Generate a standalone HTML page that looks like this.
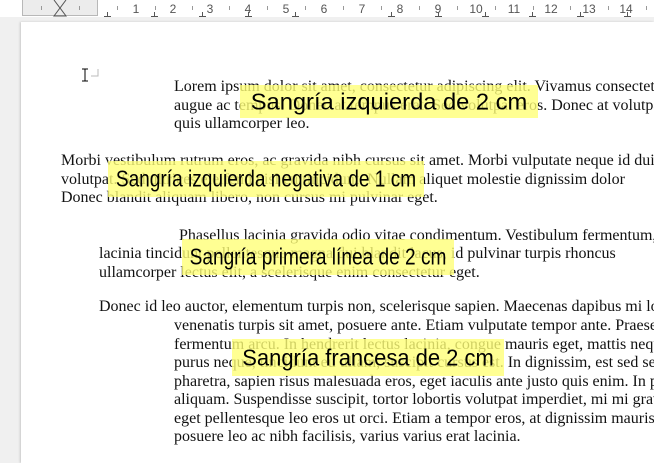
<!DOCTYPE html>
<html><head><meta charset="utf-8"><style>
html,body{margin:0;padding:0;width:654px;height:463px;overflow:hidden;background:#f0f0f0;position:relative}
.ruler{position:absolute;left:0;top:0;width:654px;height:17px;background:#fff;}
.rgray{position:absolute;left:22px;top:0;width:76px;height:16px;background:#ececec;border:1px solid #b8b8b8;border-top:none;box-sizing:border-box}
.num{position:absolute;top:2px;font:12px "Liberation Sans",sans-serif;color:#555;transform:translateX(-50%)}
.tick{position:absolute;top:6px;width:1px;height:4px;background:#999}
.tab{position:absolute;top:12px;width:7px;height:4px;border-bottom:1px solid #555}
.tab:after{content:"";position:absolute;left:3px;top:0;width:1px;height:4px;background:#555}
.page{position:absolute;left:21px;top:22px;width:633px;height:441px;background:#fff;box-shadow:-1px 0 2px #c8c8c8;overflow:hidden}
.t{position:absolute;white-space:nowrap;font:16px/18.5px "Liberation Serif",serif;color:#111}
.y{position:absolute;background:rgba(255,255,120,0.8);white-space:nowrap;overflow:hidden}
.y span{position:absolute;left:50%;top:50%;font:23px "Liberation Sans",sans-serif;color:#000;transform:translate(-50%,-50%) scaleX(0.83)}
</style></head><body>
<div class="ruler">
<div class="rgray"></div>
<svg style="position:absolute;left:53px;top:0" width="14" height="17"><path d="M1 0 L7 8 L13 0 M1 16 L7 8 L13 16 Z" fill="none" stroke="#555"/></svg>
<div class="tick" style="left:41px"></div><div class="tick" style="left:79px"></div>
<div class="num" style="left:136px">1</div><div class="num" style="left:173px">2</div><div class="num" style="left:210px">3</div><div class="num" style="left:248px">4</div><div class="num" style="left:286px">5</div><div class="num" style="left:324px">6</div><div class="num" style="left:362px">7</div><div class="num" style="left:400px">8</div><div class="num" style="left:438px">9</div><div class="num" style="left:476px">10</div><div class="num" style="left:514px">11</div><div class="num" style="left:551px">12</div><div class="num" style="left:589px">13</div><div class="num" style="left:626px">14</div>
<div class="tick" style="left:117px"></div><div class="tick" style="left:155px"></div><div class="tick" style="left:192px"></div><div class="tick" style="left:229px"></div><div class="tick" style="left:267px"></div><div class="tick" style="left:305px"></div><div class="tick" style="left:343px"></div><div class="tick" style="left:381px"></div><div class="tick" style="left:419px"></div><div class="tick" style="left:457px"></div><div class="tick" style="left:495px"></div><div class="tick" style="left:533px"></div><div class="tick" style="left:570px"></div><div class="tick" style="left:608px"></div><div class="tick" style="left:646px"></div>
<div class="tab" style="left:104px"></div><div class="tab" style="left:151px"></div><div class="tab" style="left:199px"></div><div class="tab" style="left:245px"></div><div class="tab" style="left:292px"></div><div class="tab" style="left:388px"></div><div class="tab" style="left:435px"></div><div class="tab" style="left:482px"></div><div class="tab" style="left:529px"></div><div class="tab" style="left:577px"></div><div class="tab" style="left:624px"></div>
</div>
<div class="page">
<svg style="position:absolute;left:59px;top:44px" width="20" height="20"><path d="M2 3h6M5 3v12M2 15h6" stroke="#000" fill="none"/><path d="M11 10h7V3" stroke="#bbb" fill="none"/></svg>
<div class="t" style="left:153px;top:56px">Lorem ipsum dolor sit amet, consectetur adipiscing elit. Vivamus consectetur<br>augue ac tempus. Donec at tempus erat. Sed volutpat eros. Donec at volutpat<br>quis ullamcorper leo.</div>
<div class="t" style="left:40px;top:130px">Morbi vestibulum rutrum eros, ac gravida nibh cursus sit amet. Morbi vulputate neque id dui<br>volutpat. Sed ultrices eleifend nisl eu tincidunt. Nullam aliquet molestie dignissim dolor<br>Donec blandit aliquam libero, non cursus mi pulvinar eget.</div>
<div class="t" style="left:158px;top:205px">Phasellus lacinia gravida odio vitae condimentum. Vestibulum fermentum,</div>
<div class="t" style="left:78px;top:223px">lacinia tincidunt pellentesque magna dui blandit lacus, id pulvinar turpis rhoncus<br>ullamcorper lectus elit, a scelerisque enim consectetur eget.</div>
<div class="t" style="left:78px;top:276px">Donec id leo auctor, elementum turpis non, scelerisque sapien. Maecenas dapibus mi lorem</div>
<div class="t" style="left:153px;top:295px">venenatis turpis sit amet, posuere ante. Etiam vulputate tempor ante. Praesent<br>fermentum arcu. In hendrerit lectus lacinia, congue mauris eget, mattis neque<br>purus neque, tincidunt eu ullam, suscipit cursus est. In dignissim, est sed semper<br>pharetra, sapien risus malesuada eros, eget iaculis ante justo quis enim. In porta<br>aliquam. Suspendisse suscipit, tortor lobortis volutpat imperdiet, mi mi gravida<br>eget pellentesque leo eros ut orci. Etiam a tempor eros, at dignissim mauris<br>posuere leo ac nibh facilisis, varius varius erat lacinia.</div>
</div>
<div class="y" style="left:240px;top:85px;width:298px;height:33px"><span style="transform:translate(-50%,-50%) scaleX(1.03)">Sangría izquierda de 2 cm</span></div>
<div class="y" style="left:108px;top:161px;width:316px;height:36px"><span>Sangría izquierda negativa de 1 cm</span></div>
<div class="y" style="left:182px;top:239px;width:272px;height:36px"><span>Sangría primera línea de 2 cm</span></div>
<div class="y" style="left:232px;top:339px;width:272px;height:37px"><span style="transform:translate(-50%,-50%) scaleX(0.955)">Sangría francesa de 2 cm</span></div>
</body></html>
